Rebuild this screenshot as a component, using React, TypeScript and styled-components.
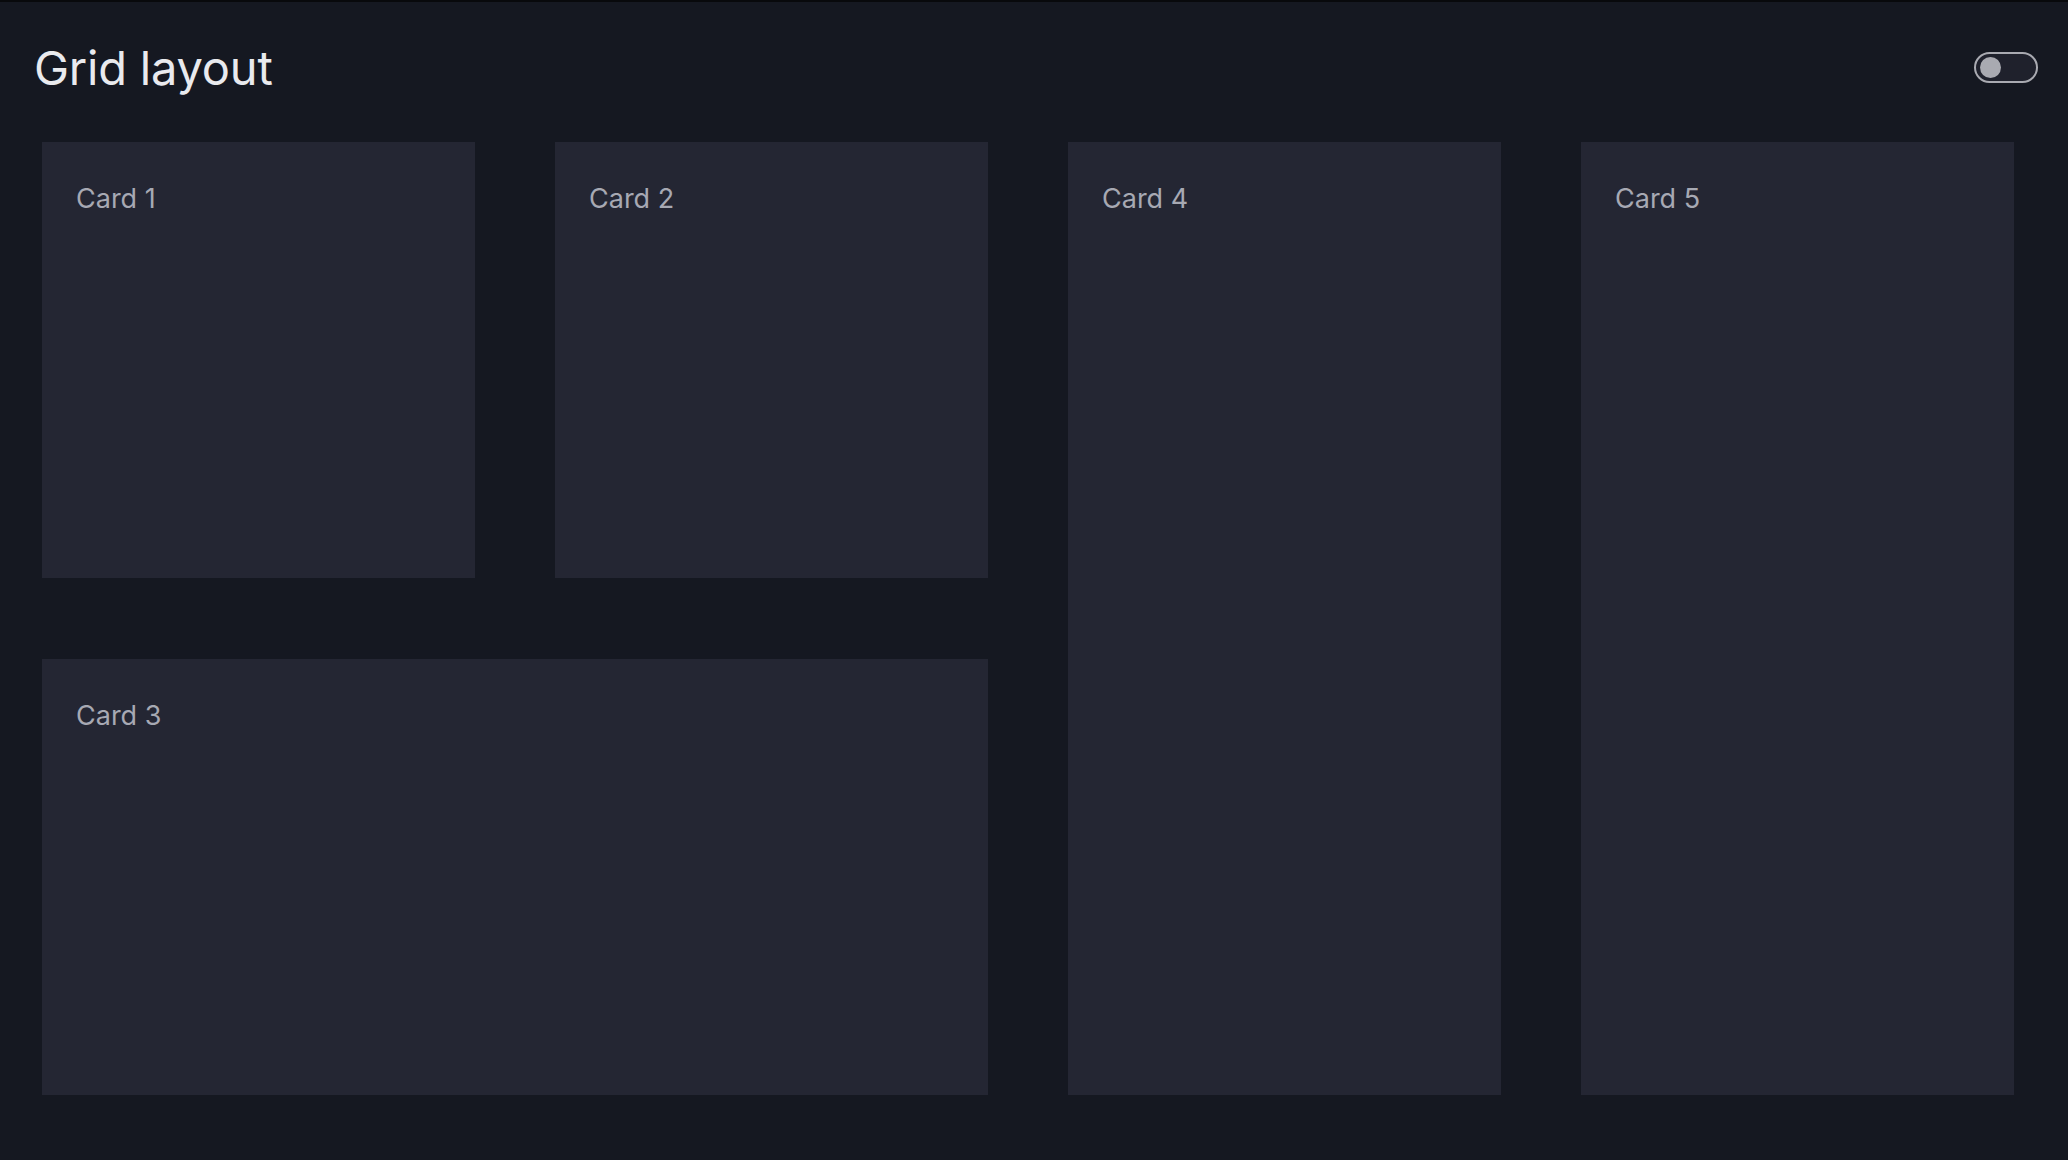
import React from "react";
import styled, { createGlobalStyle } from "styled-components";

const Global = createGlobalStyle`
  html, body { margin: 0; padding: 0; background: #151821; }
  body { font-family: Inter, "Noto Sans", sans-serif; border-top: 2px solid #08090c; }
`;

const Page = styled.div`
  width: 2068px;
  height: 1158px;
  box-sizing: border-box;
  padding: 0 54px 0 34px;
  background: #151821;
`;

const Header = styled.div`
  display: flex;
  align-items: center;
  justify-content: space-between;
  height: 140px;
  margin-top: 0;
  padding-bottom: 10px;
  box-sizing: border-box;
`;

const Title = styled.h1`
  margin: 0;
  font-size: 47px;
  font-weight: 400;
  color: #e9eaee;
  letter-spacing: -0.2px;
`;

const Toggle = styled.div`
  width: 64px;
  height: 31px;
  box-sizing: border-box;
  border: 2px solid #a9aab1;
  border-radius: 16px;
  background: #1f212c;
  display: flex;
  align-items: center;
  padding-left: 4px;
  margin-right: -24px;
`;

const Knob = styled.div`
  width: 21px;
  height: 21px;
  border-radius: 50%;
  background: #a9aab1;
`;

const Grid = styled.div`
  display: grid;
  grid-template-columns: repeat(4, 433px);
  grid-template-rows: 436px 436px;
  gap: 81px 80px;
  margin-left: 8px;
`;

const Card = styled.div<{ $col: string; $row: string }>`
  grid-column: ${(p) => p.$col};
  grid-row: ${(p) => p.$row};
  background: #242633;
  padding: 40px 34px;
  box-sizing: border-box;
  color: #a7a9b3;
  font-size: 27px;
`;

export default function App() {
  return (
    <>
      <Global />
      <Page>
        <Header>
          <Title>Grid layout</Title>
          <Toggle><Knob /></Toggle>
        </Header>
        <Grid>
          <Card $col="1" $row="1">Card 1</Card>
          <Card $col="2" $row="1">Card 2</Card>
          <Card $col="1 / span 2" $row="2">Card 3</Card>
          <Card $col="3" $row="1 / span 2">Card 4</Card>
          <Card $col="4" $row="1 / span 2">Card 5</Card>
        </Grid>
      </Page>
    </>
  );
}
